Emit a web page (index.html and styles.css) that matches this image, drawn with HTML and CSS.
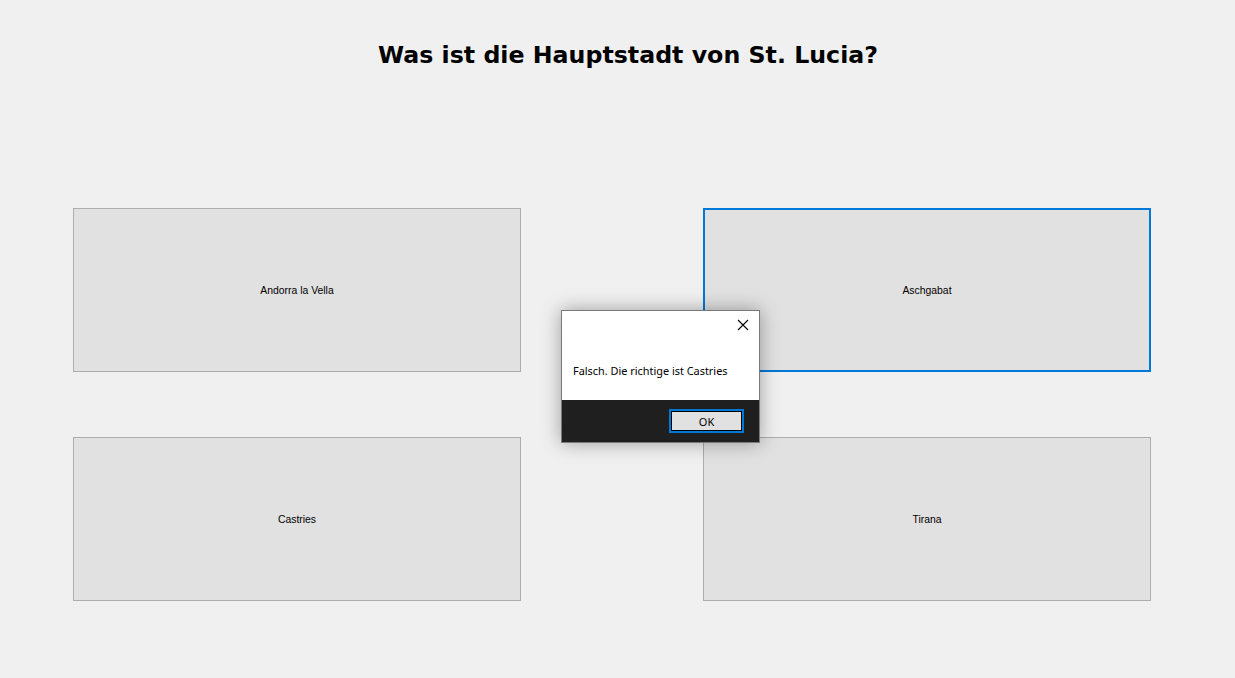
FILE: index.html
```html
<!DOCTYPE html>
<html lang="de">
<head>
<meta charset="utf-8">
<title>Quiz</title>
<link rel="stylesheet" href="styles.css">
</head>
<body>
<div class="window">
  <h1 class="question">Was ist die Hauptstadt von St. Lucia?</h1>
  <div class="answers">
    <button class="answer">Andorra la Vella</button>
    <button class="answer focused">Aschgabat</button>
    <button class="answer">Castries</button>
    <button class="answer">Tirana</button>
  </div>
  <div class="dialog">
    <div class="dialog-body">
      <div class="dialog-head">
        <svg class="close" width="12" height="12" viewBox="0 0 12 12"><path d="M1 1 L11 11 M11 1 L1 11" stroke="#000" stroke-width="1.1" fill="none"/></svg>
      </div>
      <p class="dialog-text">Falsch. Die richtige ist Castries</p>
    </div>
    <div class="dialog-foot">
      <button class="ok">OK</button>
    </div>
  </div>
</div>
</body>
</html>
```
FILE: styles.css
```css
html, body {
  margin: 0;
  padding: 0;
  background: #f0f0f0;
}
.window {
  position: relative;
  width: 1235px;
  height: 678px;
  overflow: hidden;
}
.question {
  margin: 0;
  padding-top: 40px;
  padding-left: 21px;
  height: 208px;
  box-sizing: border-box;
  text-align: center;
  font-family: "DejaVu Sans", Verdana, sans-serif;
  font-weight: bold;
  font-size: 23.7px;
  line-height: 30px;
  color: #000;
}
.answers {
  display: grid;
  grid-template-columns: 448px 448px;
  grid-template-rows: 164px 164px;
  column-gap: 182px;
  row-gap: 65px;
  padding-left: 73px;
}
.answer {
  margin: 0;
  background: #e1e1e1;
  border: 1px solid #adadad;
  font-family: "Liberation Sans", Arial, sans-serif;
  font-size: 10.4px;
  color: #000;
  padding: 0;
  padding-top: 0;
}
.answer.focused {
  border: 2px solid #0078d7;
}
.dialog {
  position: absolute;
  left: 561px;
  top: 310px;
  width: 199px;
  height: 133px;
  box-sizing: border-box;
  border: 1px solid #7a7a7a;
  background: #fff;
  box-shadow: 0 0 18px rgba(0,0,0,0.35);
  display: flex;
  flex-direction: column;
}
.dialog-body {
  flex: 1;
  display: flex;
  flex-direction: column;
}
.dialog-head {
  display: flex;
  justify-content: flex-end;
  padding: 8px 10px 0 0;
  height: 20px;
}
.close {
  display: block;
}
.dialog-text {
  margin: 0;
  padding: 24px 0 0 11px;
  font-family: "Noto Sans", "Open Sans", sans-serif;
  font-size: 10.9px;
  color: #000;
}
.dialog-foot {
  height: 42px;
  background: #1f1f1f;
  display: flex;
  justify-content: flex-end;
  align-items: flex-start;
  padding: 9px 15px 0 0;
  box-sizing: border-box;
}
.ok {
  width: 75px;
  height: 24px;
  margin: 0;
  padding: 0;
  background: #e1e1e1;
  border: 2px solid #0078d7;
  outline: 1px solid #000;
  outline-offset: -3px;
  font-family: "Noto Sans", "Open Sans", sans-serif;
  font-size: 11px;
  color: #000;
}
```
